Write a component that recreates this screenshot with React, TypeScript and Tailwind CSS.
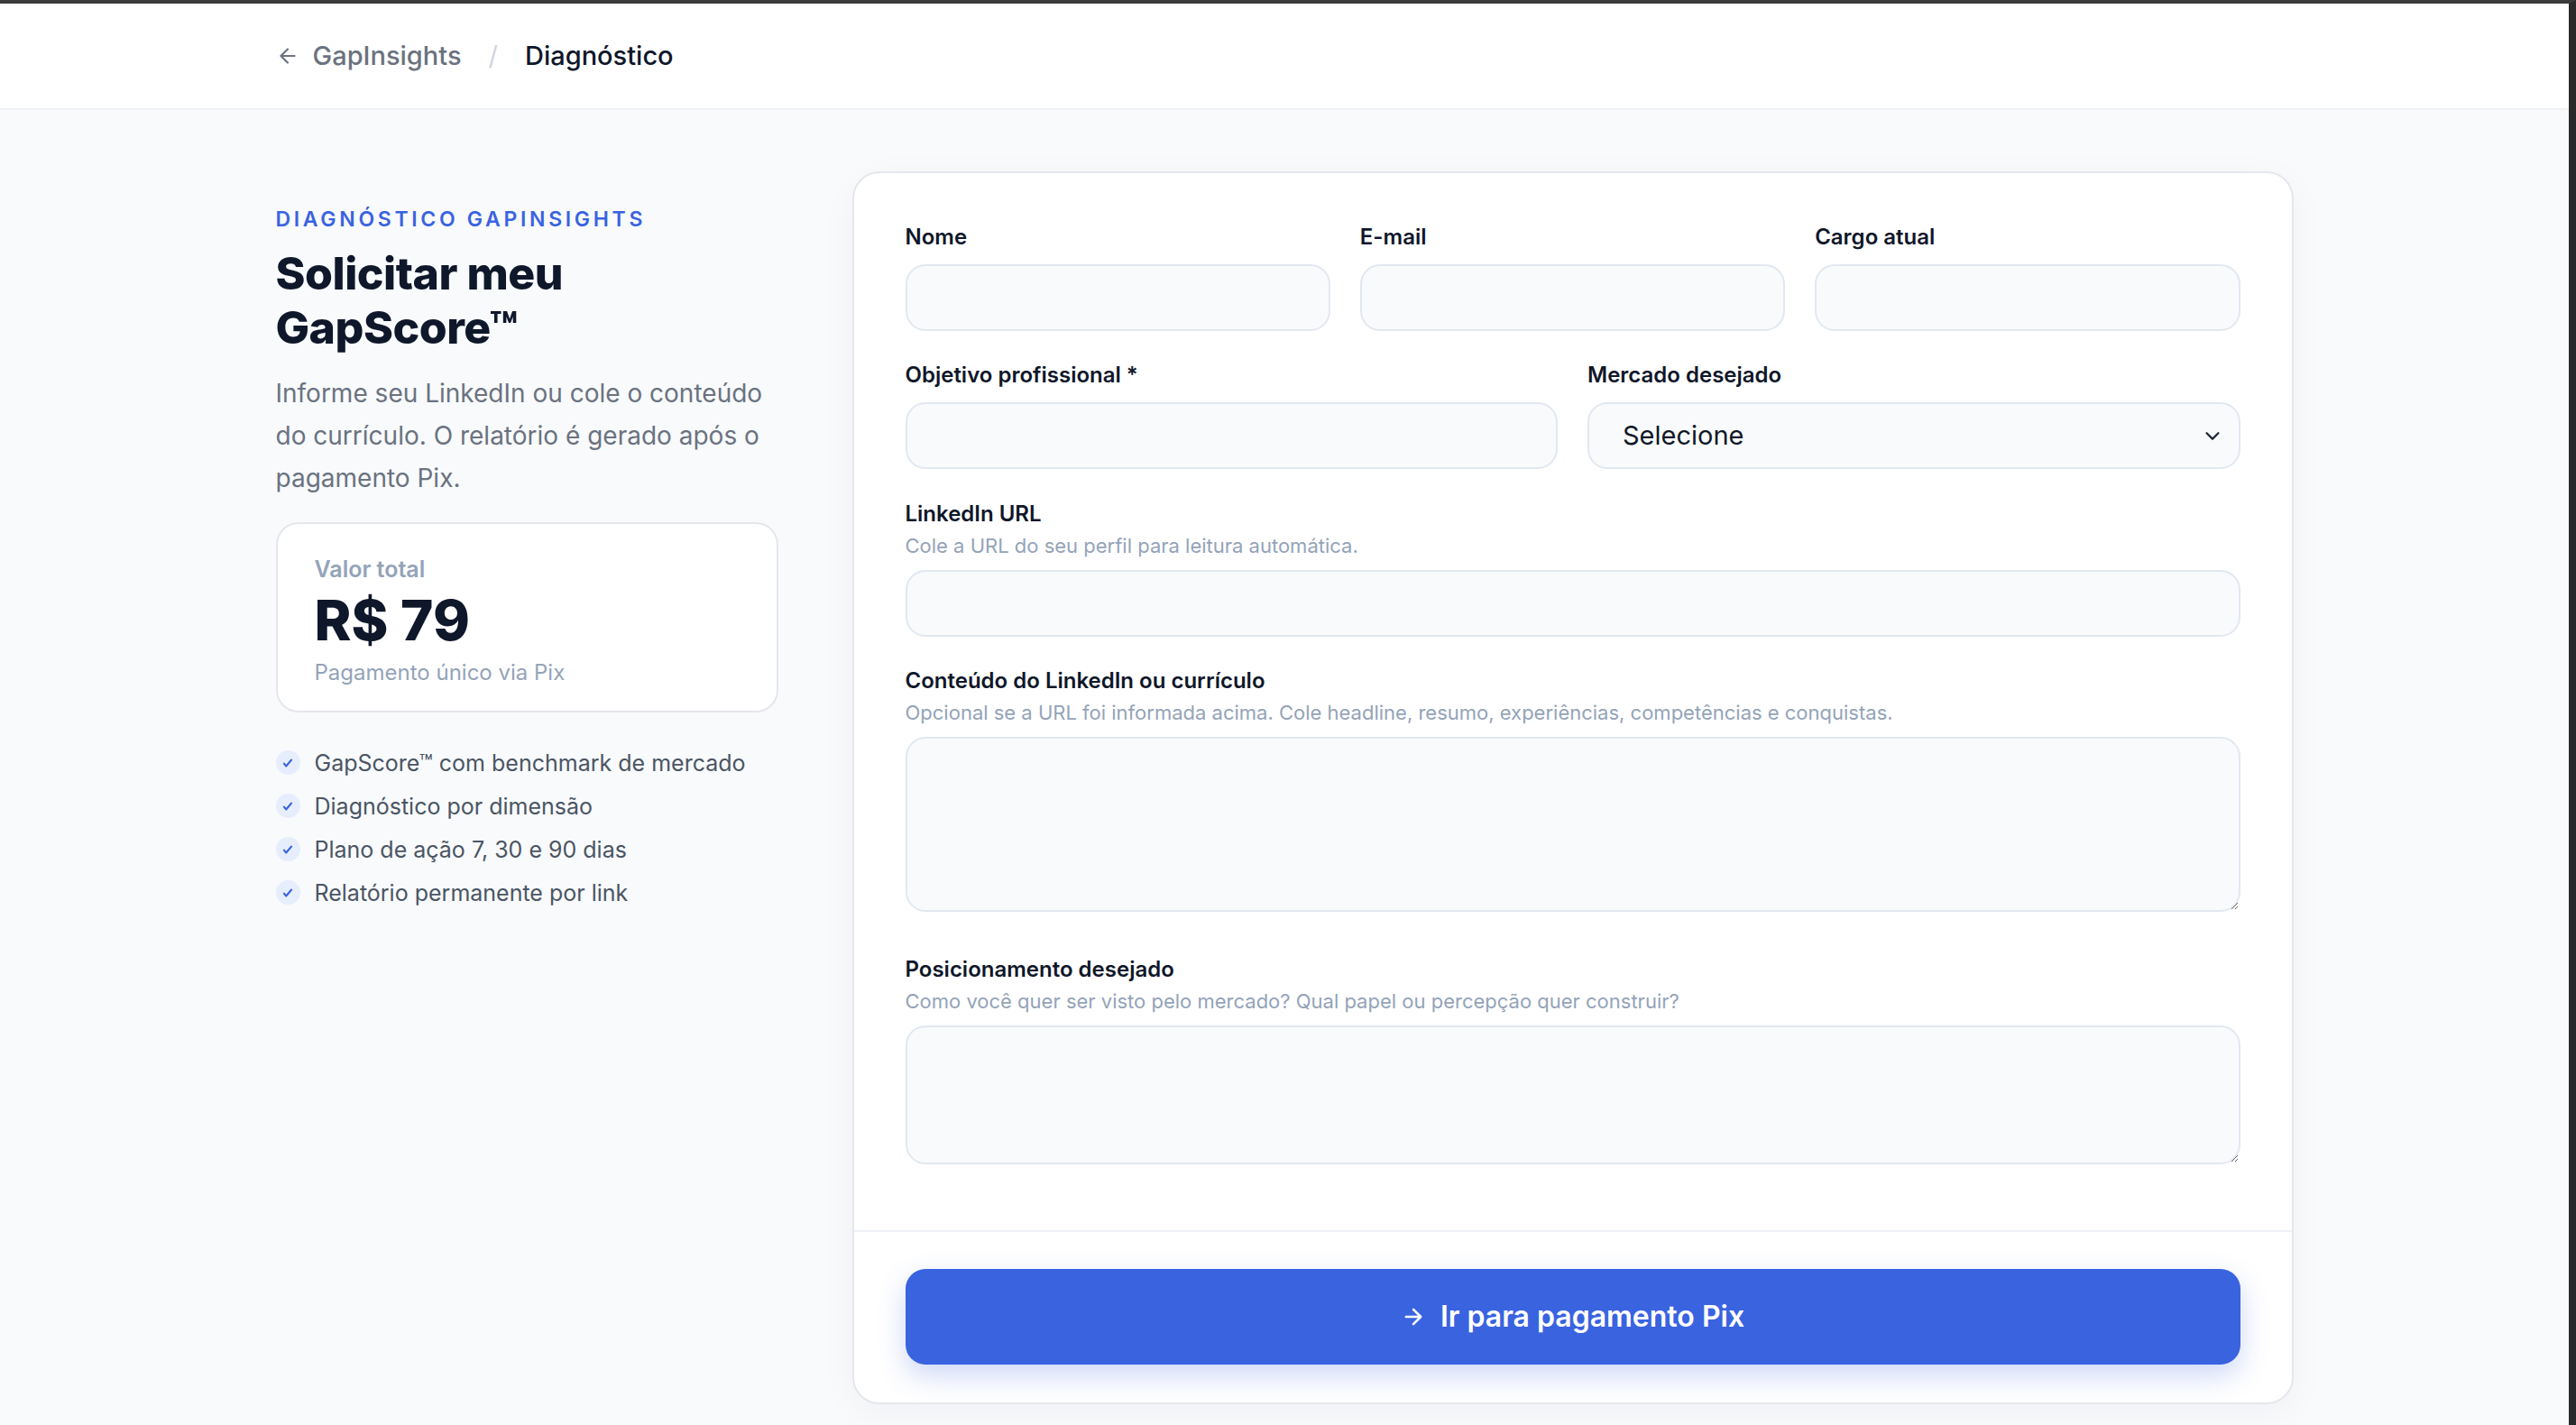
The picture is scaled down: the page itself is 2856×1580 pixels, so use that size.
import React from "react";

const font = { fontFamily: "Inter, 'Liberation Sans', sans-serif" };

function Label({ children }: { children: React.ReactNode }) {
  return <label className="text-[24px] leading-[30px] font-semibold text-[#0f172a]">{children}</label>;
}
function Help({ children }: { children: React.ReactNode }) {
  return <div className="mt-[8px] text-[22px] leading-[24px] text-[#94a3b8]">{children}</div>;
}
const inputCls = "h-[74px] w-full rounded-[22px] border-2 border-[#e2e8f0] bg-[#f8fafc] outline-none";

function Check() {
  return (
    <span className="flex h-[27px] w-[27px] items-center justify-center rounded-full bg-[#e6edfc]">
      <svg width="14" height="14" viewBox="0 0 24 24" fill="none" stroke="#3a63e0" strokeWidth="3.5" strokeLinecap="round" strokeLinejoin="round">
        <path d="M5 13l4 5L19 6" />
      </svg>
    </span>
  );
}

export default function App() {
  const items = [
    "GapScore™ com benchmark de mercado",
    "Diagnóstico por dimensão",
    "Plano de ação 7, 30 e 90 dias",
    "Relatório permanente por link",
  ];
  return (
    <div style={font} className="min-h-[1580px] w-full bg-[#f8fafc] border-t-4 border-[#3a3a3a] border-r-8 border-r-[#2a2a2a]">
      <header className="h-[118px] bg-white border-b-2 border-[#eef0f3]">
        <div className="mx-auto flex h-full w-[2237px] items-center">
          <svg width="26" height="26" viewBox="0 0 24 24" fill="none" stroke="#6b7280" strokeWidth="2" strokeLinecap="round" strokeLinejoin="round" className="mr-[15px]">
            <path d="M19 12H5M12 19l-7-7 7-7" />
          </svg>
          <span className="text-[29px] font-medium text-[#6b7280]">GapInsights</span>
          <span className="mx-[30px] text-[29px] text-[#d1d5db]">/</span>
          <span className="text-[29px] font-medium text-[#0f172a]">Diagnóstico</span>
        </div>
      </header>
      <main className="mx-auto flex w-[2237px] items-start gap-[82px] pt-[68px] pb-[20px]">
        <aside className="w-[557px] shrink-0 pt-[36px]">
          <div className="text-[23px] font-semibold tracking-[0.16em] text-[#3a63e0]">DIAGNÓSTICO GAPINSIGHTS</div>
          <h1 className="mt-[12px] text-[50px] leading-[60px] font-extrabold tracking-[-0.01em] text-[#0f172a]">Solicitar meu<br />GapScore™</h1>
          <p className="mt-[20px] text-[28px] leading-[47px] text-[#6b7280]">Informe seu LinkedIn ou cole o conteúdo do currículo. O relatório é gerado após o pagamento Pix.</p>
          <div className="mt-[25px] h-[211px] rounded-[25px] border-2 border-[#e5e7eb] bg-white px-[41px] pt-[32px]">
            <div className="text-[25px] font-semibold text-[#94a3b8]">Valor total</div>
            <div className="mt-[2px] text-[62px] leading-[72px] font-extrabold text-[#0f172a]">R$ 79</div>
            <div className="mt-[4px] text-[24px] text-[#94a3b8]">Pagamento único via Pix</div>
          </div>
          <ul className="mt-[42px] flex flex-col gap-[20px]">
            {items.map((t) => (
              <li key={t} className="flex items-center gap-[16px] text-[25px] leading-[28px] text-[#4b5563]">
                <Check />
                {t}
              </li>
            ))}
          </ul>
        </aside>
        <section className="flex-1 rounded-[30px] border-2 border-[#e5e7eb] bg-white shadow-[0_10px_40px_rgba(15,23,42,0.04)]">
          <div className="flex flex-col px-[57px] pt-[56px] pb-[73px]">
            <div className="grid grid-cols-3 gap-x-[33px]">
              {["Nome", "E-mail", "Cargo atual"].map((l) => (
                <div key={l} className="flex flex-col">
                  <Label>{l}</Label>
                  <input className={inputCls + " mt-[15px]"} />
                </div>
              ))}
            </div>
            <div className="mt-[34px] grid grid-cols-2 gap-x-[33px]">
              <div className="flex flex-col">
                <Label>Objetivo profissional *</Label>
                <input className={inputCls + " mt-[15px]"} />
              </div>
              <div className="flex flex-col">
                <Label>Mercado desejado</Label>
                <div className={inputCls + " mt-[15px] flex items-center justify-between pl-[37px] pr-[18px]"}>
                  <span className="text-[29px] text-[#111827]">Selecione</span>
                  <svg width="22" height="22" viewBox="0 0 24 24" fill="none" stroke="#1f2937" strokeWidth="2.5" strokeLinecap="round" strokeLinejoin="round">
                    <path d="M5 9l7 7 7-7" />
                  </svg>
                </div>
              </div>
            </div>
            <div className="mt-[35px] flex flex-col">
              <Label>LinkedIn URL</Label>
              <Help>Cole a URL do seu perfil para leitura automática.</Help>
              <input className={inputCls + " mt-[15px]"} />
            </div>
            <div className="mt-[34px] flex flex-col">
              <Label>Conteúdo do LinkedIn ou currículo</Label>
              <Help>Opcional se a URL foi informada acima. Cole headline, resumo, experiências, competências e conquistas.</Help>
              <textarea className="mt-[15px] h-[194px] w-full rounded-[22px] border-2 border-[#e2e8f0] bg-[#f8fafc] outline-none" />
            </div>
            <div className="mt-[49px] flex flex-col">
              <Label>Posicionamento desejado</Label>
              <Help>Como você quer ser visto pelo mercado? Qual papel ou percepção quer construir?</Help>
              <textarea className="mt-[15px] h-[154px] w-full rounded-[22px] border-2 border-[#e2e8f0] bg-[#f8fafc] outline-none" />
            </div>
          </div>
          <div className="border-t-2 border-[#eef1f5] px-[57px] pt-[41px] pb-[42px]">
            <button className="flex h-[106px] w-full items-center justify-center gap-[16px] rounded-[22px] bg-[#3a63e0] text-[32px] font-semibold text-white shadow-[0_12px_30px_rgba(58,99,224,0.25)]">
              <svg width="28" height="28" viewBox="0 0 24 24" fill="none" stroke="white" strokeWidth="2.2" strokeLinecap="round" strokeLinejoin="round">
                <path d="M5 12h14M12 5l7 7-7 7" />
              </svg>
              Ir para pagamento Pix
            </button>
          </div>
        </section>
      </main>
    </div>
  );
}
